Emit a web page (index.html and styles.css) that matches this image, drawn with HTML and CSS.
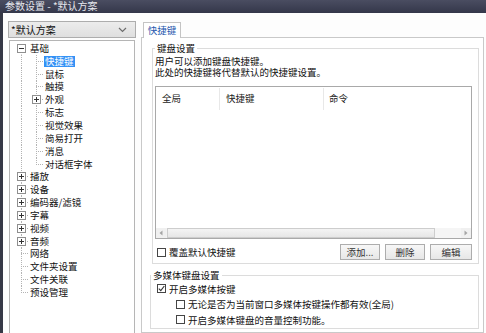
FILE: index.html
```html
<!DOCTYPE html>
<html lang="zh-CN">
  <head>
    <meta charset="UTF-8" />
    <title>参数设置 - *默认方案</title>
    <link rel="stylesheet" href="styles.css">
  </head>
  <body>
    <div class="window">
      <div class="titlebar">参数设置 - *默认方案</div>
      <div class="main">
        <div class="sidebar">
          <div class="combo">
            <span>*默认方案</span>
            <svg width="9" height="6" viewBox="0 0 9 6"><path d="M1 1l3.5 3.5L8 1" fill="none" stroke="#6d6d6d" stroke-width="1.2"/></svg>
          </div>
          <div class="tree">
            <div class="row"><span class="cell top"><svg class="exp" width="9" height="9" viewBox="0 0 9 9"><rect x="0.5" y="0.5" width="8" height="8" fill="#fff" stroke="#8f8f8f"/><path d="M2 4.5h5" stroke="#333"/></svg></span><span class="label">基础</span></div>
            <div class="row"><span class="cell pipe"></span><span class="cell tee"></span><span class="label sel">快捷键</span></div>
            <div class="row"><span class="cell pipe"></span><span class="cell tee"></span><span class="label">鼠标</span></div>
            <div class="row"><span class="cell pipe"></span><span class="cell tee"></span><span class="label">触摸</span></div>
            <div class="row"><span class="cell pipe"></span><span class="cell tee"><svg class="exp" width="9" height="9" viewBox="0 0 9 9"><rect x="0.5" y="0.5" width="8" height="8" fill="#fff" stroke="#8f8f8f"/><path d="M2 4.5h5M4.5 2v5" stroke="#333"/></svg></span><span class="label">外观</span></div>
            <div class="row"><span class="cell pipe"></span><span class="cell tee"></span><span class="label">标志</span></div>
            <div class="row"><span class="cell pipe"></span><span class="cell tee"></span><span class="label">视觉效果</span></div>
            <div class="row"><span class="cell pipe"></span><span class="cell tee"></span><span class="label">简易打开</span></div>
            <div class="row"><span class="cell pipe"></span><span class="cell tee"></span><span class="label">消息</span></div>
            <div class="row"><span class="cell pipe"></span><span class="cell ell"></span><span class="label">对话框字体</span></div>
            <div class="row"><span class="cell tee"><svg class="exp" width="9" height="9" viewBox="0 0 9 9"><rect x="0.5" y="0.5" width="8" height="8" fill="#fff" stroke="#8f8f8f"/><path d="M2 4.5h5M4.5 2v5" stroke="#333"/></svg></span><span class="label">播放</span></div>
            <div class="row"><span class="cell tee"><svg class="exp" width="9" height="9" viewBox="0 0 9 9"><rect x="0.5" y="0.5" width="8" height="8" fill="#fff" stroke="#8f8f8f"/><path d="M2 4.5h5M4.5 2v5" stroke="#333"/></svg></span><span class="label">设备</span></div>
            <div class="row"><span class="cell tee"><svg class="exp" width="9" height="9" viewBox="0 0 9 9"><rect x="0.5" y="0.5" width="8" height="8" fill="#fff" stroke="#8f8f8f"/><path d="M2 4.5h5M4.5 2v5" stroke="#333"/></svg></span><span class="label">编码器/滤镜</span></div>
            <div class="row"><span class="cell tee"><svg class="exp" width="9" height="9" viewBox="0 0 9 9"><rect x="0.5" y="0.5" width="8" height="8" fill="#fff" stroke="#8f8f8f"/><path d="M2 4.5h5M4.5 2v5" stroke="#333"/></svg></span><span class="label">字幕</span></div>
            <div class="row"><span class="cell tee"><svg class="exp" width="9" height="9" viewBox="0 0 9 9"><rect x="0.5" y="0.5" width="8" height="8" fill="#fff" stroke="#8f8f8f"/><path d="M2 4.5h5M4.5 2v5" stroke="#333"/></svg></span><span class="label">视频</span></div>
            <div class="row"><span class="cell tee"><svg class="exp" width="9" height="9" viewBox="0 0 9 9"><rect x="0.5" y="0.5" width="8" height="8" fill="#fff" stroke="#8f8f8f"/><path d="M2 4.5h5M4.5 2v5" stroke="#333"/></svg></span><span class="label">音频</span></div>
            <div class="row"><span class="cell tee"></span><span class="label">网络</span></div>
            <div class="row"><span class="cell tee"></span><span class="label">文件夹设置</span></div>
            <div class="row"><span class="cell tee"></span><span class="label">文件关联</span></div>
            <div class="row"><span class="cell ell"></span><span class="label">预设管理</span></div>
          </div>
        </div>

        <div class="content">
          <div class="tabs">
            <span class="tab-gap"></span>
            <div class="tab">快捷键</div>
            <span class="tab-fill"></span>
          </div>
          <div class="pane">
            <fieldset class="group keys">
              <legend>键盘设置</legend>
              <div class="desc">
                <p>用户可以添加键盘快捷键。</p>
                <p>此处的快捷键将代替默认的快捷键设置。</p>
              </div>
              <div class="list">
                <div class="list-head">
                  <span class="col c1">全局</span>
                  <span class="col c2">快捷键</span>
                  <span class="col c3">命令</span>
                </div>
                <div class="list-body"></div>
                <div class="hscroll">
                  <span class="arrow"><svg width="4" height="6" viewBox="0 0 4 6"><path d="M3.5 0.5L0.5 3l3 2.5z" fill="#a5a5a5"/></svg></span>
                  <span class="thumb"></span>
                  <span class="track"></span>
                  <span class="arrow"><svg width="4" height="6" viewBox="0 0 4 6"><path d="M0.5 0.5L3.5 3l-3 2.5z" fill="#a5a5a5"/></svg></span>
                </div>
              </div>
              <div class="actions">
                <div class="check"><span class="box"></span>覆盖默认快捷键</div>
                <div class="buttons">
                  <button type="button" class="btn">添加...</button>
                  <button type="button" class="btn">删除</button>
                  <button type="button" class="btn wide">编辑</button>
                </div>
              </div>
            </fieldset>

            <fieldset class="group media">
              <legend>多媒体键盘设置</legend>
              <div class="check opt"><span class="box"><svg width="7" height="7" viewBox="0 0 7 7"><path d="M0.8 3.6l2 2L6.3 1" fill="none" stroke="#333" stroke-width="1.1"/></svg></span>开启多媒体按键</div>
              <div class="check opt sub"><span class="box"></span>无论是否为当前窗口多媒体按键操作都有效(全局)</div>
              <div class="check opt sub"><span class="box"></span>开启多媒体键盘的音量控制功能。</div>
            </fieldset>
          </div>
        </div>
      </div>
    </div>
  </body>
</html>
```

FILE: styles.css
```css
* {
  box-sizing: border-box;
}

body {
  margin: 0;
  width: 486px;
  height: 333px;
  overflow: hidden;
  font-family: "Noto Sans CJK SC", "Liberation Sans", sans-serif;
  font-size: 9.5px;
  color: #111;
  background: #fff;
}

.window {
  display: flex;
  flex-direction: column;
  height: 333px;
}

.titlebar {
  height: 13px;
  flex: none;
  padding-left: 5px;
  font-size: 10px;
  line-height: 11px;
  color: #e6e7ee;
  background: linear-gradient(#4a4d61, #34374a);
  overflow: hidden;
  white-space: pre;
}

.main {
  flex: 1;
  display: flex;
  min-height: 0;
  border-left: 3px solid #353846;
  background: #fdfdfd;
}

/* left side */
.sidebar {
  width: 138px;
  flex: none;
  display: flex;
  flex-direction: column;
  padding: 8px 0 0 5px;
}

.combo {
  width: 128px;
  height: 17px;
  flex: none;
  display: flex;
  align-items: center;
  justify-content: space-between;
  padding: 0 8px 0 2px;
  font-size: 10px;
  border: 1px solid #adadad;
  background: linear-gradient(#ececec, #dfdfdf);
}

.tree {
  flex: 1;
  width: 126px;
  margin: 2px 0 0 1px;
  padding: 1px 0 0 4px;
  border: 1px solid #b5b5b5;
  border-bottom: none;
  background: #fff;
}

.row {
  display: flex;
  align-items: center;
  height: 12.85px;
}

.cell {
  width: 15px;
  height: 100%;
  flex: none;
  display: flex;
  align-items: center;
  background-repeat: no-repeat;
}

.pipe {
  background-image: repeating-linear-gradient(#b4b4b4 0 1px, transparent 1px 2px);
  background-size: 1px 100%;
  background-position: 7px 0;
}

.top {
  background-image: repeating-linear-gradient(#b4b4b4 0 1px, transparent 1px 2px);
  background-size: 1px 50%;
  background-position: 7px 100%;
}

.tee {
  background-image: repeating-linear-gradient(#b4b4b4 0 1px, transparent 1px 2px),
    repeating-linear-gradient(90deg, #b4b4b4 0 1px, transparent 1px 2px);
  background-size: 1px 100%, 8px 1px;
  background-position: 7px 0, 7px 50%;
}

.ell {
  background-image: repeating-linear-gradient(#b4b4b4 0 1px, transparent 1px 2px),
    repeating-linear-gradient(90deg, #b4b4b4 0 1px, transparent 1px 2px);
  background-size: 1px 50%, 8px 1px;
  background-position: 7px 0, 7px 50%;
}

.exp {
  display: block;
  margin-left: 3px;
}

.label {
  padding: 0 1px;
  height: 11px;
  line-height: 11px;
  white-space: nowrap;
}

.label.sel {
  color: #fff;
  background: #3391f5;
}

/* right side */
.content {
  flex: 1;
  display: flex;
  flex-direction: column;
  padding: 9px 2px 0 0;
}

.tabs {
  display: flex;
  height: 16px;
  flex: none;
}

.tab-gap {
  width: 2px;
  border-bottom: 1px solid #c9c9c9;
}

.tab {
  width: 38px;
  text-align: center;
  line-height: 14px;
  color: #2758ae;
  background: #fff;
  border: 1px solid #c4c4c4;
  border-bottom: none;
}

.tab-fill {
  flex: 1;
  border-bottom: 1px solid #c9c9c9;
}

.pane {
  flex: 1;
  display: flex;
  flex-direction: column;
  background: #fff;
  border: 1px solid #c9c9c9;
  border-top: none;
}

.group {
  min-width: 0;
  margin: 5px 4px 0 10px;
  padding: 0 6px 3px 2px;
  border: 1px solid #dcdcdc;
}

.group legend {
  padding: 0 2px;
  height: 11px;
  line-height: 11px;
  color: #111;
}

.desc {
  margin-top: 2px;
}

.desc p {
  margin: 0;
  line-height: 10.5px;
  white-space: nowrap;
}

.list {
  height: 153px;
  margin-top: 9px;
  display: flex;
  flex-direction: column;
  border: 1px solid #a9a9a9;
  background: #fff;
}

.list-head {
  display: flex;
  height: 23px;
  flex: none;
}

.col {
  height: 22px;
  margin-top: 1px;
  padding-left: 6px;
  line-height: 21px;
  color: #222;
  border-right: 1px solid #e8e8e8;
}

.c1 {
  width: 64px;
}

.c2 {
  width: 104px;
}

.c3 {
  flex: 1;
  padding-left: 5px;
  border-right: none;
}

.list-body {
  flex: 1;
}

.hscroll {
  display: flex;
  height: 10px;
  flex: none;
  background: #f2f2f2;
}

.arrow {
  width: 10px;
  display: flex;
  align-items: center;
  justify-content: center;
  background: #f0f0f0;
}

.thumb {
  width: 268px;
  margin-left: 1px;
  border: 1px solid #cdcdcd;
  background: linear-gradient(#f4f4f4, #e6e6e6);
}

.track {
  flex: 1;
  background: #f5f5f5;
}

.actions {
  display: flex;
  align-items: center;
  justify-content: space-between;
  height: 16px;
  margin-top: 5px;
  padding-left: 2px;
}

.check {
  display: flex;
  align-items: center;
  white-space: nowrap;
}

.box {
  width: 9px;
  height: 9px;
  flex: none;
  margin-right: 3px;
  display: flex;
  align-items: center;
  justify-content: center;
  border: 1px solid #454545;
  background: #fff;
}

.buttons {
  display: flex;
  gap: 5px;
}

.btn {
  width: 40px;
  height: 16px;
  padding: 0;
  font-family: inherit;
  font-size: 9.5px;
  color: #333;
  border: 1px solid #adadad;
  background: linear-gradient(#f7f7f7, #e7e7e7);
}

.btn.wide {
  width: 42px;
}

.media {
  margin: 6px 4px 0 8px;
  padding: 0 6px 0 0;
}

.opt {
  height: 15.5px;
  padding-left: 6px;
}

.opt.sub {
  padding-left: 25px;
}
```
